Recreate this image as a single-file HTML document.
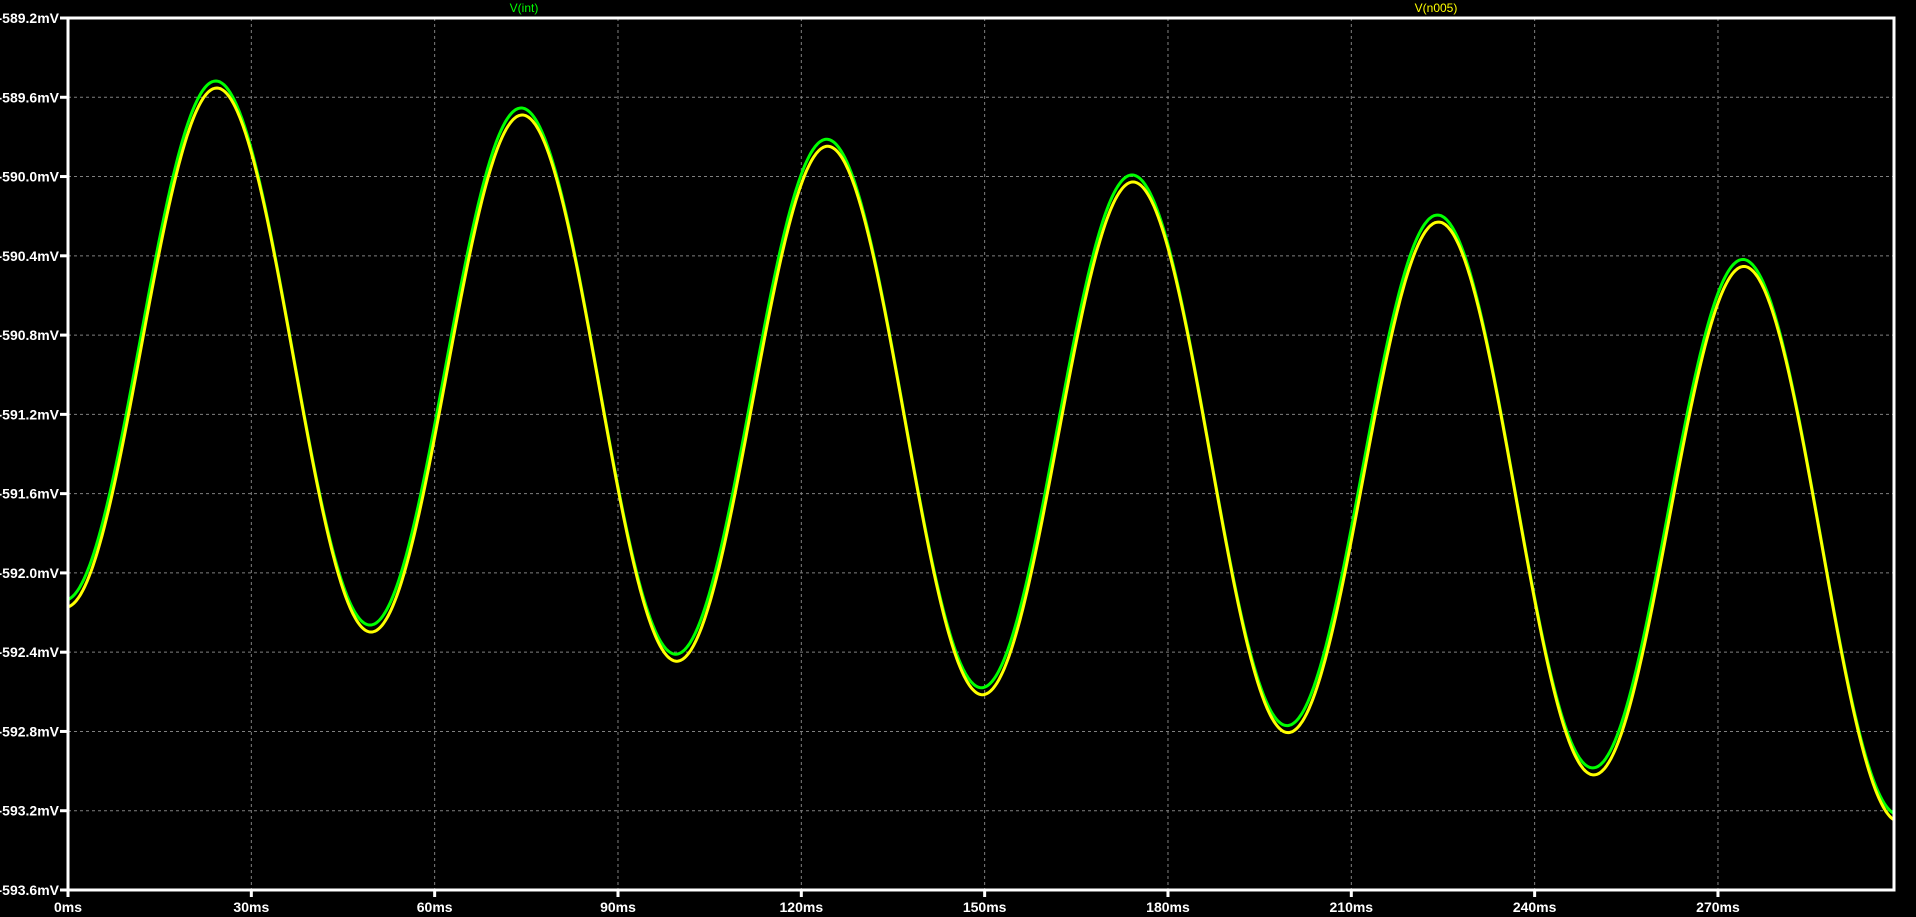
<!DOCTYPE html>
<html><head><meta charset="utf-8">
<style>
html,body{margin:0;padding:0;background:#000;width:1916px;height:917px;overflow:hidden}
svg{display:block}
.yl{font-family:"Liberation Sans",sans-serif;font-weight:bold;font-size:14px;fill:#fff;text-anchor:end}
.xl{font-family:"Liberation Sans",sans-serif;font-weight:bold;font-size:14px;fill:#fff;text-anchor:middle}
.tl{font-family:"Liberation Sans",sans-serif;font-size:12px;text-anchor:middle}
</style></head>
<body>
<svg id="s" width="1916" height="917" viewBox="0 0 1916 917" xmlns="http://www.w3.org/2000/svg">
<rect width="1916" height="917" fill="#000"/>
<g id="grid" stroke="#808080" stroke-width="1" stroke-dasharray="3,3"></g>
<g id="labels"></g>
<path id="g" fill="none" stroke="#00ff00" stroke-width="3"/>
<path id="y" fill="none" stroke="#ffff00" stroke-width="3"/>
<rect x="68" y="18" width="1826" height="872" fill="none" stroke="#fff" stroke-width="3"/>
<text class="tl" x="524" y="12" fill="#00ff00">V(int)</text>
<text class="tl" x="1436" y="12" fill="#ffff00">V(n005)</text>
</svg>
<script>
var NS="http://www.w3.org/2000/svg";
var grid=document.getElementById("grid"),lab=document.getElementById("labels");
function el(n,a,p,t){var e=document.createElementNS(NS,n);for(var k in a)e.setAttribute(k,a[k]);if(t)e.textContent=t;p.appendChild(e);return e;}
var L=68,T=18,B=890,R=1894,dy=(B-T)/11,dx=183.33;
for(var i=0;i<=11;i++){var y=T+i*dy;
 if(i>0&&i<11)el("line",{x1:L,y1:y,x2:R,y2:y},grid);
 el("line",{x1:60,y1:y,x2:L,y2:y,stroke:"#fff","stroke-width":3},lab);
 var v=(589.2+0.4*i).toFixed(1);
 el("text",{class:"yl",x:59,y:y+5},lab,"-"+v+"mV");}
for(var j=0;j<=9;j++){var x=L+j*dx;
 if(j>0)el("line",{x1:x,y1:T,x2:x,y2:B},grid);
 el("line",{x1:x,y1:B,x2:x,y2:897,stroke:"#fff","stroke-width":3},lab);
 el("text",{class:"xl",x:x,y:912},lab,(j*30)+"ms");}
function c(t){var u=t-37;return 355+0.5175*u+0.000875*u*u;}
function mk(off,dxo){var d="";for(var px=L;px<=R;px++){var t=(px-L-dxo)/6.111;
 var y=c(t)-265.5*Math.cos(2*Math.PI*(t-24.3)/50)+off;
 d+=(px==L?"M":"L")+px+","+y.toFixed(1);}return d;}
document.getElementById("g").setAttribute("d",mk(-2,0));
document.getElementById("y").setAttribute("d",mk(5,1));
</script>
</body></html>
